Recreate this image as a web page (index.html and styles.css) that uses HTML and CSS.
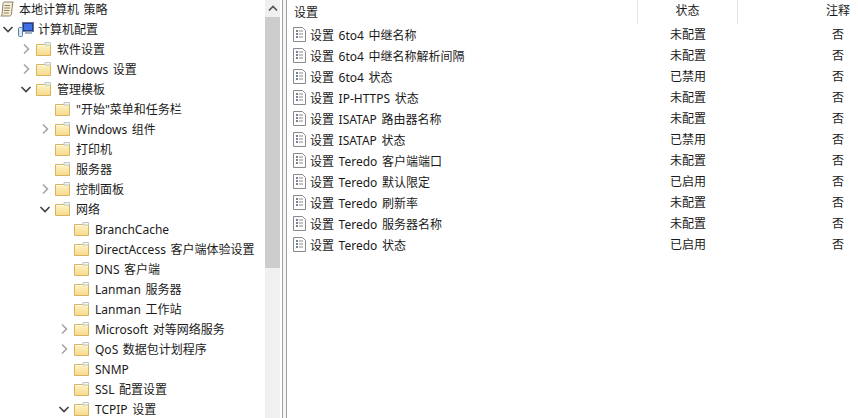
FILE: index.html
```html
<!DOCTYPE html>
<html lang="zh-CN">
<head>
<meta charset="utf-8">
<title>本地计算机 策略</title>
<link rel="stylesheet" href="styles.css">
</head>
<body>
<svg class="defs" width="0" height="0" aria-hidden="true">
  <defs>
    <linearGradient id="fg" x1="0" y1="0" x2="0" y2="1"><stop offset="0" stop-color="#fff3c4"/><stop offset="1" stop-color="#f6d98c"/></linearGradient>
    <symbol id="folder" viewBox="0 0 15 14">
      <path d="M.5 2.500h14v11H.5z" fill="url(#fg)" stroke="#d9b45f"/>
      <path d="M9 .5h5.500v2.500H9z" fill="#fdf6dc" stroke="#b9c9d0"/>
      <path d="M1.500 3.500H9" stroke="#fffbe8"/>
    </symbol>
    <symbol id="doc" viewBox="0 0 13 15">
      <path d="M.5.5h9l3 3v11H.5z" fill="#fdfdfd" stroke="#8a8a8a"/>
      <path d="M3 4h2M3 7h2M3 10h2" stroke="#4a5a70" stroke-width="1.400"/>
      <path d="M6 4h4M6 7h4M6 10h4" stroke="#8d8d8d"/>
    </symbol>
    <symbol id="right" viewBox="0 0 9 12"><path d="M2 1.500 6.500 6 2 10.500" fill="none" stroke="#a6a6a6" stroke-width="1.600"/></symbol>
    <symbol id="down" viewBox="0 0 12 9"><path d="M1.500 2 6 6.500 10.500 2" fill="none" stroke="#404040" stroke-width="1.600"/></symbol>
  </defs>
</svg>
<main class="window">
  <nav class="tree">
    <ul class="rows">
      <li class="row"><svg class="icon-root" viewBox="0 0 14 16"><path d="M3 2.500c0-1 .8-1.500 2-1.500h8.500c-.8.500-1 1-1 2l-1 10c0 1.200-1 2-2 2H.8c.8-.3 1.200-1 1.300-2z" fill="#f4ecd4" stroke="#8f8468"/><path d="M4.500 4.500h5.500M4.300 7h5.500M4 9.500h5.500M3.800 12h5" stroke="#8f8468"/></svg><span class="t">本地计算机 策略</span></li>
      <li class="row l0"><svg class="tw down"><use href="#down"/></svg><svg class="icon-pc" viewBox="0 0 16 16"><rect x="4.500" y="1.500" width="11" height="9" fill="#1f3f9a" stroke="#6a7686"/><rect x="6" y="3" width="8" height="6" fill="#3f6fe0"/><rect x="7" y="10.500" width="7" height="2.500" fill="#a9b3c0"/><rect x=".5" y="6.500" width="4" height="9" rx="1" fill="#dfe6ee" stroke="#4f7fb0"/></svg><span class="t">计算机配置</span></li>
      <li class="row l1"><svg class="tw right"><use href="#right"/></svg><svg class="folder"><use href="#folder"/></svg><span class="t">软件设置</span></li>
      <li class="row l1"><svg class="tw right"><use href="#right"/></svg><svg class="folder"><use href="#folder"/></svg><span class="t">Windows 设置</span></li>
      <li class="row l1"><svg class="tw down"><use href="#down"/></svg><svg class="folder"><use href="#folder"/></svg><span class="t">管理模板</span></li>
      <li class="row l2"><i class="tw"></i><svg class="folder"><use href="#folder"/></svg><span class="t">"开始"菜单和任务栏</span></li>
      <li class="row l2"><svg class="tw right"><use href="#right"/></svg><svg class="folder"><use href="#folder"/></svg><span class="t">Windows 组件</span></li>
      <li class="row l2"><i class="tw"></i><svg class="folder"><use href="#folder"/></svg><span class="t">打印机</span></li>
      <li class="row l2"><i class="tw"></i><svg class="folder"><use href="#folder"/></svg><span class="t">服务器</span></li>
      <li class="row l2"><svg class="tw right"><use href="#right"/></svg><svg class="folder"><use href="#folder"/></svg><span class="t">控制面板</span></li>
      <li class="row l2"><svg class="tw down"><use href="#down"/></svg><svg class="folder"><use href="#folder"/></svg><span class="t">网络</span></li>
      <li class="row l3"><i class="tw"></i><svg class="folder"><use href="#folder"/></svg><span class="t">BranchCache</span></li>
      <li class="row l3"><i class="tw"></i><svg class="folder"><use href="#folder"/></svg><span class="t">DirectAccess 客户端体验设置</span></li>
      <li class="row l3"><i class="tw"></i><svg class="folder"><use href="#folder"/></svg><span class="t">DNS 客户端</span></li>
      <li class="row l3"><i class="tw"></i><svg class="folder"><use href="#folder"/></svg><span class="t">Lanman 服务器</span></li>
      <li class="row l3"><i class="tw"></i><svg class="folder"><use href="#folder"/></svg><span class="t">Lanman 工作站</span></li>
      <li class="row l3"><svg class="tw right"><use href="#right"/></svg><svg class="folder"><use href="#folder"/></svg><span class="t">Microsoft 对等网络服务</span></li>
      <li class="row l3"><svg class="tw right"><use href="#right"/></svg><svg class="folder"><use href="#folder"/></svg><span class="t">QoS 数据包计划程序</span></li>
      <li class="row l3"><i class="tw"></i><svg class="folder"><use href="#folder"/></svg><span class="t">SNMP</span></li>
      <li class="row l3"><i class="tw"></i><svg class="folder"><use href="#folder"/></svg><span class="t">SSL 配置设置</span></li>
      <li class="row l3"><svg class="tw down"><use href="#down"/></svg><svg class="folder"><use href="#folder"/></svg><span class="t">TCPIP 设置</span></li>
    </ul>
  </nav>
  <div class="scrollbar">
    <div class="arrow"><svg viewBox="0 0 10 7" width="10" height="7"><path d="M1 5.500 5 1.500l4 4" fill="none" stroke="#505050" stroke-width="1.600"/></svg></div>
    <div class="thumb"></div>
  </div>
  <div class="splitter"></div>
  <section class="list">
    <div class="head">
      <div class="c-name"><span class="t">设置</span></div>
      <div class="c-state">状态</div>
      <div class="c-note">注释</div>
    </div>
    <div class="item"><div class="c-name"><svg class="doc"><use href="#doc"/></svg><span class="t">设置 6to4 中继名称</span></div><div class="c-state">未配置</div><div class="c-note">否</div></div>
    <div class="item"><div class="c-name"><svg class="doc"><use href="#doc"/></svg><span class="t">设置 6to4 中继名称解析间隔</span></div><div class="c-state">未配置</div><div class="c-note">否</div></div>
    <div class="item"><div class="c-name"><svg class="doc"><use href="#doc"/></svg><span class="t">设置 6to4 状态</span></div><div class="c-state">已禁用</div><div class="c-note">否</div></div>
    <div class="item"><div class="c-name"><svg class="doc"><use href="#doc"/></svg><span class="t">设置 IP-HTTPS 状态</span></div><div class="c-state">未配置</div><div class="c-note">否</div></div>
    <div class="item"><div class="c-name"><svg class="doc"><use href="#doc"/></svg><span class="t">设置 ISATAP 路由器名称</span></div><div class="c-state">未配置</div><div class="c-note">否</div></div>
    <div class="item"><div class="c-name"><svg class="doc"><use href="#doc"/></svg><span class="t">设置 ISATAP 状态</span></div><div class="c-state">已禁用</div><div class="c-note">否</div></div>
    <div class="item"><div class="c-name"><svg class="doc"><use href="#doc"/></svg><span class="t">设置 Teredo 客户端端口</span></div><div class="c-state">未配置</div><div class="c-note">否</div></div>
    <div class="item"><div class="c-name"><svg class="doc"><use href="#doc"/></svg><span class="t">设置 Teredo 默认限定</span></div><div class="c-state">已启用</div><div class="c-note">否</div></div>
    <div class="item"><div class="c-name"><svg class="doc"><use href="#doc"/></svg><span class="t">设置 Teredo 刷新率</span></div><div class="c-state">未配置</div><div class="c-note">否</div></div>
    <div class="item"><div class="c-name"><svg class="doc"><use href="#doc"/></svg><span class="t">设置 Teredo 服务器名称</span></div><div class="c-state">未配置</div><div class="c-note">否</div></div>
    <div class="item"><div class="c-name"><svg class="doc"><use href="#doc"/></svg><span class="t">设置 Teredo 状态</span></div><div class="c-state">已启用</div><div class="c-note">否</div></div>
  </section>
</main>
</body>
</html>
```

FILE: styles.css
```css
* { box-sizing: border-box; }
html, body { margin: 0; height: 100%; background: #fff; overflow: hidden; }
body { font: 12px/20px "Noto Sans", "Noto Sans CJK SC", sans-serif; color: #1a1a1a; word-spacing: 1.5px; }
.defs { position: absolute; }
.window { display: flex; width: 858px; height: 418px; overflow: hidden; }
.tree { width: 265px; flex: none; overflow: hidden; }
.rows { list-style: none; margin: -1px 0 0; padding: 0; }
.row { display: flex; align-items: center; height: 20px; white-space: nowrap; }
.t { padding-top: 2px; }
.l0 { padding-left: 2px; }
.l1 { padding-left: 20px; }
.l2 { padding-left: 39px; }
.l3 { padding-left: 58px; }
.tw { display: block; flex: none; width: 12px; height: 9px; margin-right: 4px; }
.tw.right { width: 9px; height: 12px; margin: 0 5px 0 2px; }
.folder { flex: none; width: 15px; height: 14px; margin-right: 6px; }
.icon-root { flex: none; width: 14px; height: 16px; margin-right: 5px; }
.icon-pc { flex: none; width: 16px; height: 16px; margin-right: 4px; }
.scrollbar { width: 15px; flex: none; margin-right: 2px; background: #f0f0f0; display: flex; flex-direction: column; }
.arrow { height: 17px; display: flex; align-items: center; justify-content: center; }
.thumb { height: 251px; background: #cdcdcd; }
.splitter { width: 5px; flex: none; border-left: 1px solid #a0a0a8; border-right: 1px solid #a0a0a8; background: #f6f6f6; }
.list { flex: 1; min-width: 0; overflow: hidden; }
.head, .item { display: flex; height: 21px; }
.head { height: 24px; }
.head > div { border-right: 1px solid #e5e5e5; }
.head .c-note { border-right: 0; }
.c-name { width: 351px; flex: none; padding-left: 7px; display: flex; align-items: center; white-space: nowrap; }
.c-state { width: 100px; flex: none; padding-top: 1px; text-align: center; }
.c-note { width: 200px; flex: none; padding-top: 1px; text-align: center; }
.item .c-name { padding-left: 6px; }
.doc { flex: none; width: 13px; height: 15px; margin-right: 4px; }
```
